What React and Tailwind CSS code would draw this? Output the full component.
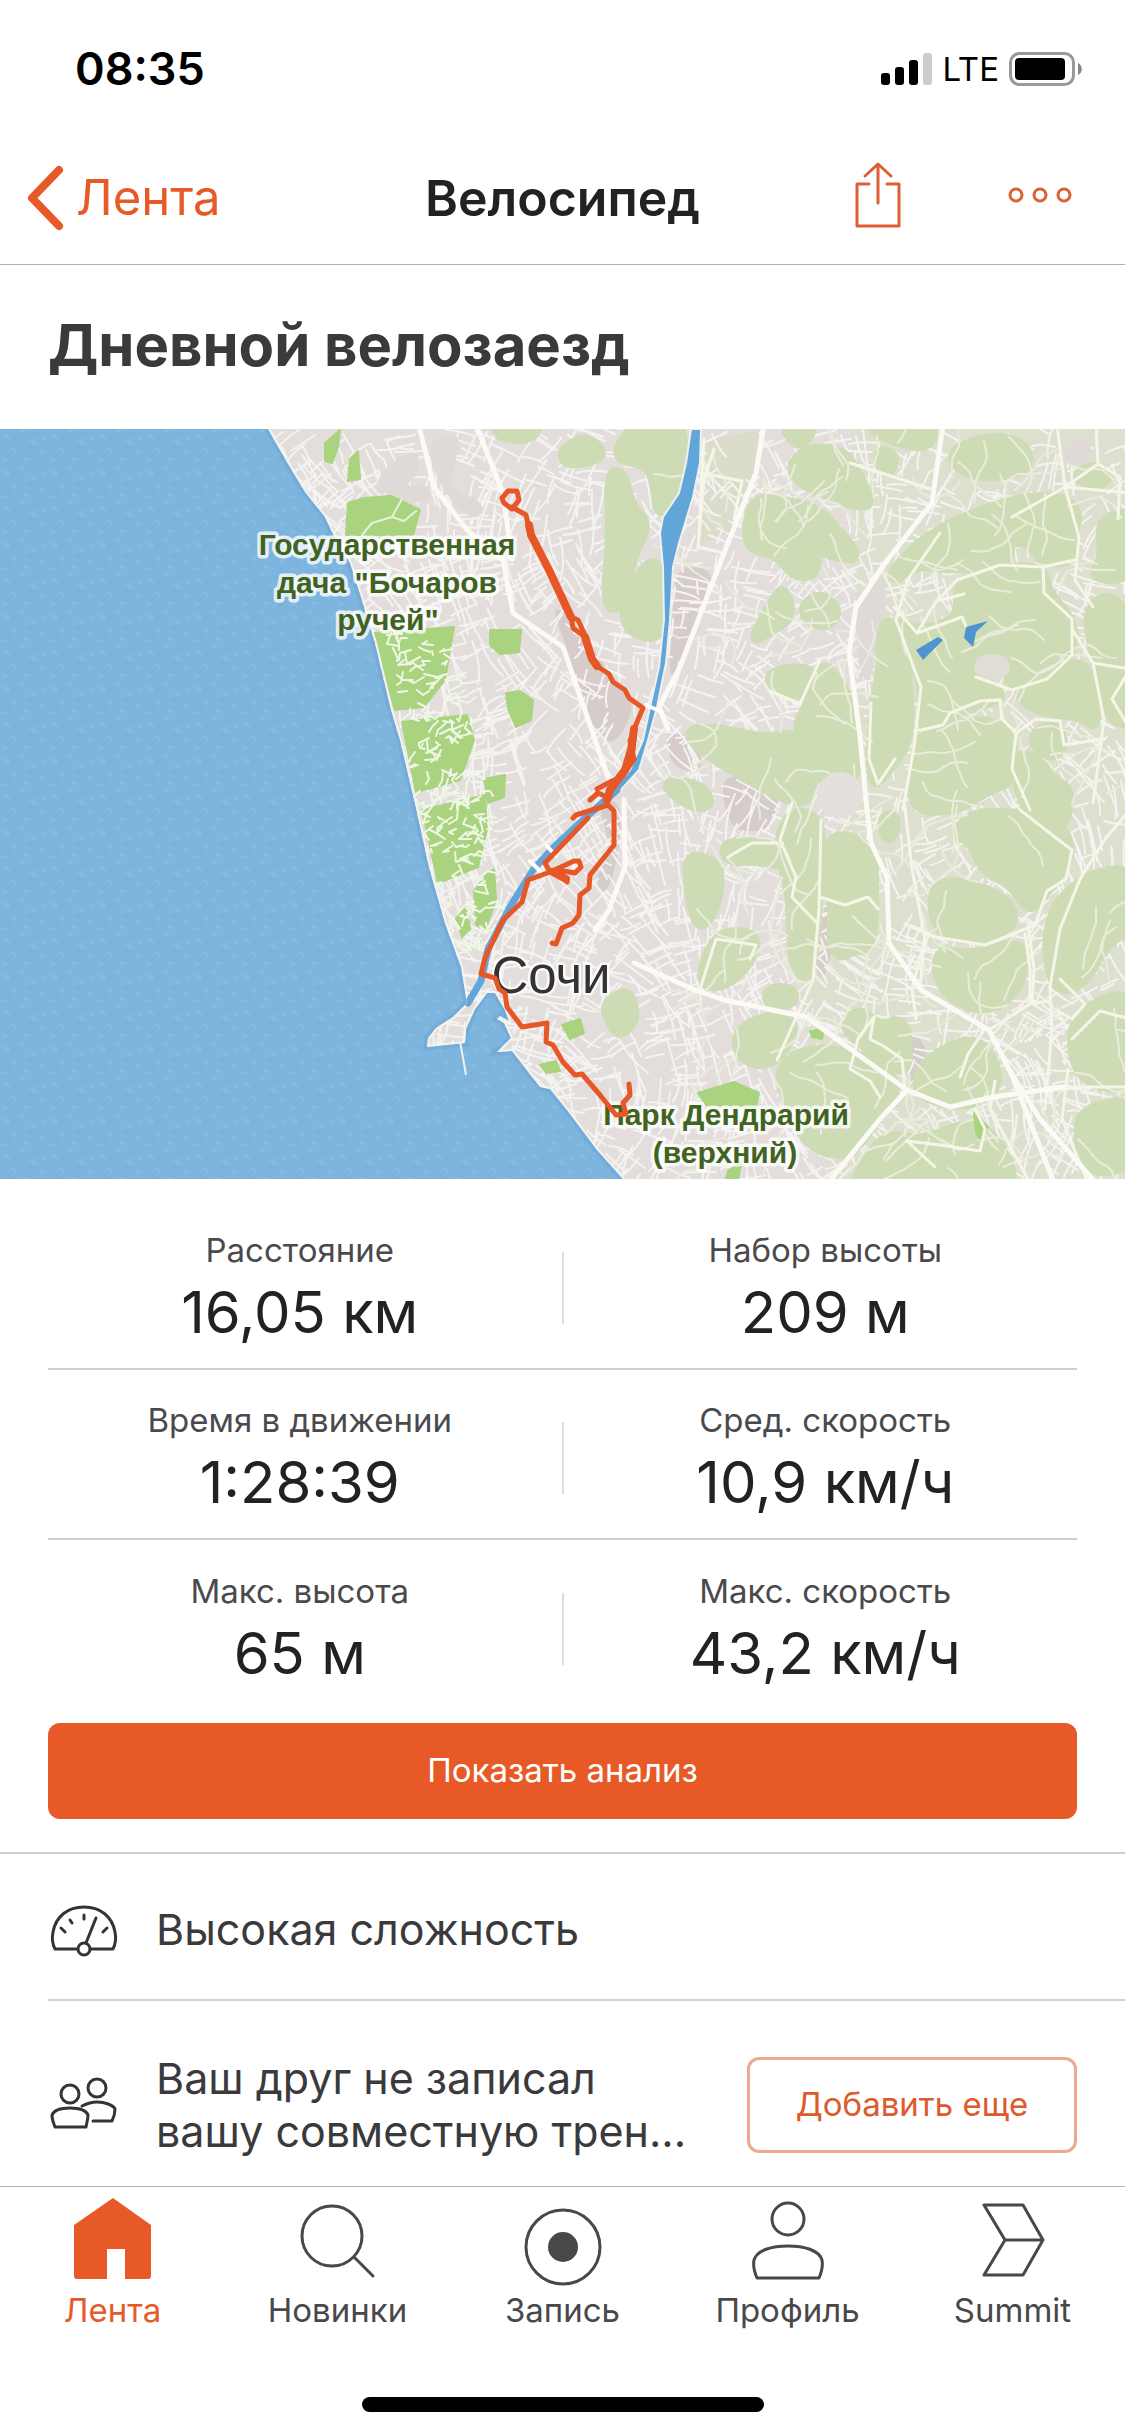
const stats = [
  [
    { label: 'Расстояние', value: '16,05 км' },
    { label: 'Набор высоты', value: '209 м' },
  ],
  [
    { label: 'Время в движении', value: '1:28:39' },
    { label: 'Сред. скорость', value: '10,9 км/ч' },
  ],
  [
    { label: 'Макс. высота', value: '65 м' },
    { label: 'Макс. скорость', value: '43,2 км/ч' },
  ],
];

// Map geometry, in a 1125 x 750 box
const LAND =
  'M262 -10 L268 0 L287 33 L305 63 L325 88 L332 103 L350 134 L361 168 L375 214 L391 281 L400 311 L416 379 L429 438 L445 494 L461 538 L467 574 L453 588 L436 599 L428 609 L427 618 L465 614 L466 600 L475 580 L487 564 L495 564 L505 581 L509 592 L500 587 L497 590 L504 594 L511 609 L497 623 L512 622 L540 658 L550 660 L567 681 L597 721 L623 750 L632 760 L1135 760 L1135 -10 Z';

const RIVER =
  'M691 0 L701 0 L700 34 L693 68 L679 114 L673 138 L670 191 L666 234 L657 278 L648 311 L639 341 L619 363 L612 361 L630 341 L643 311 L650 278 L659 238 L664 191 L663 138 L660 104 L663 88 L679 64 L686 34 Z';

const HILLS = [
  '637,-8 680,-8 684,31 677,61 659,88 657,58 648,34 612,29',
  '609,44 623,44 630,78 648,94 630,131 623,178 605,178 612,108',
  '630,158 659,124 662,191 655,211 623,198',
  '562,22 585,8 604,24 590,32 566,34',
  '784,-4 813,-4 806,12 794,14',
  '792,34 813,18 846,24 864,58 871,81 813,61 795,48',
  '752,71 777,71 820,81 842,108 856,124 849,131 813,118 817,144 795,148 777,124 745,118',
  '880,22 895,26 890,44 880,38',
  '950,24 986,8 1025,14 1029,41 986,48 960,41',
  '935,101 1011,71 1061,68 1079,84 1070,110 1075,131 1043,134 1030,112 1008,112 1010,128 993,134 957,140 914,134 896,151 892,142',
  '957,151 1011,138 1043,141 1047,164 1072,191 1072,224 1047,254 1007,258 1012,236 996,222 976,224 970,246 1000,262 998,271 950,284 943,298 921,301 925,258 907,218 896,191 917,204 961,191',
  '821,231 842,258 853,278 860,344 846,344 817,354 795,301 810,274',
  '776,168 784,160 792,188 765,204 752,212',
  '804,176 820,166 838,180 828,198 806,190',
  '770,244 810,238 814,262 788,266 772,256',
  '882,198 892,191 907,244 910,311 885,344 871,358 874,274 882,244',
  '866,-4 936,-4 926,20 890,10',
  '921,308 946,298 986,291 1011,304 1014,351 986,361 957,381 910,381 917,324',
  '1100,90 1135,82 1135,148 1092,150 1104,128',
  '1074,48 1092,36 1108,48 1096,58',
  '1086,182 1110,164 1135,200 1135,296 1108,290 1096,230',
  '1012,258 1074,234 1088,240 1098,300 1082,286 1036,282',
  '1034,304 1056,294 1064,318 1052,328 1036,318',
  '1016,324 1040,332 1052,352 1070,360 1064,400 1036,396 1018,360',
  '684,301 724,301 763,311 795,304 810,331 813,368 792,374 734,341 706,324',
  '660,352 700,356 712,376 690,378',
  '792,381 821,391 819,438 813,538 799,551 792,521 792,468 777,414',
  '724,416 750,412 782,420 790,438 760,430 728,432',
  '828,404 871,414 874,464 871,520 852,520 840,528 831,511 835,471 821,454',
  '884,386 896,388 892,410 884,406',
  '979,381 1057,391 1072,421 1057,448 1040,470 1029,481 1010,452 986,444 971,411 953,404',
  '1047,488 1083,448 1135,438 1135,500 1108,510 1080,560 1050,558',
  '1082,580 1135,560 1135,660 1082,654 1070,610',
  '1086,680 1135,670 1135,738 1084,744 1078,700',
  '932,448 1000,464 1015,488 1005,501 979,511 935,504',
  '936,520 972,528 1020,512 1026,540 1008,572 975,582 940,560',
  '917,648 932,628 968,610 990,622 1000,658 968,678 921,668',
  '860,580 880,600 900,590 908,610 905,648 870,620 842,598',
  '813,618 874,630 900,658 876,690 849,728 810,718 790,680 777,638',
  '716,504 756,504 752,531 724,558 698,554',
  '768,560 792,560 794,574 768,576',
  '738,598 785,584 795,604 770,638 738,628',
  '684,424 716,434 720,452 712,488 696,500',
  '628,560 636,590 620,606 612,596 604,576',
  '856,748 885,704 920,714 975,691 1004,721 1016,760 860,760',
  '496,-6 540,-6 530,10 500,8',
];

const BUILT_UP = [
  '548,166 590,214 610,246 640,276 604,330 570,230',
  '676,134 718,142 700,190 680,240 668,250 672,190',
  '664,300 698,308 704,344 672,340',
  '596,370 622,372 620,420 606,470 594,450 612,420',
  '824,470 838,470 828,548 814,548',
  '840,448 868,450 874,462 842,466',
  '912,600 930,624 922,650 908,660 906,620',
  '722,342 780,360 776,400 736,404 724,380',
];

// Quarters without a street grid
const OPEN_GROUND = [
  '384,38 418,18 420,46 396,62 372,66',
  '428,10 462,4 456,30 448,58 486,74 478,92 456,80 432,40',
  '376,66 424,52 434,72 404,74',
  '856,160 888,150 884,196 868,262 856,230',
  '1060,20 1090,4 1092,30 1070,40',
];

const PARKS = [
  '348,74 364,69 391,67 420,81 413,106 346,106',
  '325,14 340,1 338,18 332,34 325,32',
  '350,30 358,22 360,50 348,52',
  '373,204 454,198 445,251 424,278 395,281',
  '490,201 521,201 519,223 500,225 490,216',
  '506,264 520,262 533,271 531,291 516,298 508,280',
  '402,293 467,286 474,311 460,351 416,363',
  '484,350 505,346 504,368 488,374',
  '422,381 485,366 487,401 478,438 438,454',
  '698,664 734,653 759,664 756,678 706,676',
  '728,742 742,732 738,750 726,750',
  '810,602 824,600 822,610 812,608',
  '974,684 988,698 980,710 976,704',
  '540,636 556,632 560,642 546,644',
  '562,596 580,590 584,604 570,610',
  '456,490 466,478 470,500 462,508',
  '474,462 484,448 494,440 496,470 486,500 476,496',
];

const ROADS = [
  'M420 1 L434 58 L467 101 L503 131 L513 184 L563 218 L609 351',
  'M478 1 L503 64 L512 130',
  'M763 1 L756 44 L724 124 L680 238 L659 278 L668 300',
  'M943 -4 L932 74 L885 134 L856 178 L849 224 L860 308 L867 381 L871 414 L887 448 L889 514 L921 561 L989 601 L1011 644 L1054 754',
  'M634 534 L695 561 L724 571 L806 588 L907 661 L950 678 L993 668 L1065 658',
  'M907 661 L880 690 L828 754',
  'M624 371 L625 438 L609 481 L595 501',
  'M1011 644 L1040 690 L1096 754',
];

const LANES = [
  'M940 104 L908 150 L896 191 L921 258 L914 318 L903 381',
  'M904 371 L912 440 L925 510 L912 560 L916 590',
  'M821 391 L819 480 L813 551 L777 631',
  'M989 601 L1030 575 L1030 540 L1025 505',
  'M995 652 L990 680 L1030 754',
  'M1057 -4 L1065 58 L1079 108 L1075 151 L1093 178',
  'M1012 88 L1065 58 L1130 64',
  'M1096 -4 L1098 35 L1120 48 L1118 90',
  'M1065 58 L1098 35',
  'M1075 131 L1043 138 L1000 136 L957 151 L935 174',
  'M1043 138 L1044 164 L1072 190 L1072 226 L1047 250 L1012 261 L976 248',
  'M1072 200 L1093 234 L1104 291 L1093 374',
  'M921 301 L943 296 L950 284 L980 272 L1000 271 L1002 290 L1016 304 L1012 340 L1030 381',
  'M1016 304 L1036 290 L1060 292 L1064 316 L1104 310',
  'M917 204 L940 196 L962 188 L968 202',
  'M894 178 L917 204 L936 172 L964 165',
  'M871 274 L869 330 L878 355 L895 330',
  'M792 374 L780 411 L796 448 L792 468 L817 494',
  'M1020 381 L1060 412 L1072 421 L1066 450 L1047 462 L1035 496 L985 516 L935 508 L905 495',
  'M1130 381 L1105 410 L1080 450 L1060 500 L1050 558 L1052 600 L1045 680',
  'M1028 496 L1034 540 L1032 575 L1048 572',
  'M925 506 L920 560 L985 600 L968 625 L960 648',
  'M874 588 L858 610 L850 640 L870 652 L880 668',
  'M874 588 L870 610 L885 618 L902 630 L905 660',
  'M1065 658 L1130 658',
  'M1060 550 L1085 575 L1072 590 L1058 582',
  'M1072 610 L1100 582 L1130 590',
  'M1068 640 L1062 690 L1088 754',
  'M907 712 L940 716 L980 722 L985 700 L975 680',
  'M907 712 L935 738',
  'M700 560 L716 510 L756 516 L750 530',
  'M728 428 L752 414 L777 414',
  'M820 468 L845 476 L868 468 L878 480',
  'M702 44 L742 52 L734 90',
  'M704 10 L698 120',
  'M714 20 L704 50 L698 118 L724 124',
  'M850 34 L900 50 L930 60',
  'M820 231 L800 275 L770 262',
  'M1093 234 L1130 240 L1112 270 L1130 300',
];

const ROUTE =
  'M504 74 L502 69 L508 62 L517 62 L519 71 L512 80 L504 74 M512 78 L526 86 L531 108 L540 124 L549 141 L563 171 L571 188 L573 199 L585 208 L592 230 L597 237 L609 245 L613 253 L625 261 L629 269 L643 279 L635 298 L633 321 L627 341 L610 361 L607 373 M571 188 L578 191 L585 206 M635 298 L630 312 L634 330 L622 348 L612 352 L597 360 M607 368 L598 364 L590 371 M573 389 L576 386 L608 376 L614 382 L614 416 L590 446 L589 459 L580 466 L579 486 L573 494 L562 499 L556 515 L552 514 M588 389 L545 434 L550 443 L574 432 L579 432 L581 438 L575 444 L557 441 L567 453 M550 443 L528 451 L522 473 L503 491 L485 529 L481 545 L495 549 L499 560 L505 564 L507 578 L522 598 L547 594 L546 613 L553 616 L563 633 L575 646 L582 645 L600 666 L616 686 L626 685 L623 674 L630 666 L629 655';

function createRandom(seed) {
  let state = seed;
  return () => {
    state = (state * 16807) % 2147483647;
    return state / 2147483647;
  };
}

// Closed outline with rounded corners, from a list of "x,y" points
function smooth(points) {
  const list = points.split(' ').map((p) => p.split(',').map(Number));
  const mid = (a, b) => `${(a[0] + b[0]) / 2} ${(a[1] + b[1]) / 2}`;
  let d = `M${mid(list[list.length - 1], list[0])}`;
  list.forEach((p, i) => {
    d += `Q${p[0]} ${p[1]} ${mid(p, list[(i + 1) % list.length])}`;
  });
  return d + 'Z';
}

// Small city streets: a fixed pseudo-random network that follows the coast line
function buildStreets() {
  const rnd = createRandom(7);
  let d = '';
  for (let i = 0; i < 3600; i++) {
    const x = 270 + Math.pow(rnd(), 1.15) * 860;
    const y = rnd() * 750;
    const across = rnd() > 0.5;
    const base = 1.1 + Math.sin(x / 70 + y / 140) * 0.6 + Math.cos(y / 60) * 0.5;
    const angle = base + (across ? Math.PI / 2 : 0);
    const length = across ? 8 + rnd() * 12 : 10 + rnd() * 18;
    const bend = (rnd() - 0.5) * 1.2;
    const mx = x + Math.cos(angle) * length;
    const my = y + Math.sin(angle) * length;
    const ex = mx + Math.cos(angle + bend) * length * 0.7;
    const ey = my + Math.sin(angle + bend) * length * 0.7;
    d += `M${x.toFixed(0)} ${y.toFixed(0)}Q${mx.toFixed(0)} ${my.toFixed(0)} ${ex.toFixed(0)} ${ey.toFixed(0)}`;
  }
  return d;
}

// Winding lanes that climb into the hills
function buildTwigs() {
  const rnd = createRandom(41);
  let d = '';
  for (let i = 0; i < 190; i++) {
    let x = 700 + rnd() * 420;
    let y = rnd() * 750;
    let angle = rnd() * Math.PI * 2;
    d += `M${x.toFixed(0)} ${y.toFixed(0)}`;
    for (let j = 0; j < 4; j++) {
      angle += (rnd() - 0.5) * 1.2;
      const cx = x + Math.cos(angle) * 8;
      const cy = y + Math.sin(angle) * 8;
      angle += (rnd() - 0.5) * 1.2;
      x = cx + Math.cos(angle) * 8;
      y = cy + Math.sin(angle) * 8;
      d += `Q${cx.toFixed(0)} ${cy.toFixed(0)} ${x.toFixed(0)} ${y.toFixed(0)}`;
    }
  }
  return d;
}

// Footpaths inside the bright green parks
function buildPaths() {
  const rnd = createRandom(99);
  let d = '';
  for (let i = 0; i < 170; i++) {
    const y = 206 + rnd() * 320;
    const x = 385 + (y - 206) * 0.18 + rnd() * 70;
    d += `M${x.toFixed(0)} ${y.toFixed(0)}l${(rnd() * 26 - 13).toFixed(0)} ${(rnd() * 16 - 8).toFixed(0)}l${(rnd() * 18 - 6).toFixed(0)} ${(rnd() * 18 - 12).toFixed(0)}`;
  }
  return d;
}

const streets = buildStreets();
const twigs = buildTwigs();
const paths = buildPaths();

function RouteMap() {
  return (
    <svg viewBox="0 0 1125 750" className="block w-full" role="img" aria-label="Карта маршрута">
      <defs>
        <pattern id="waves" width="48" height="36" patternUnits="userSpaceOnUse">
          <rect width="48" height="36" fill="#7eb5de" />
          <path d="M4 6l5 3M20 3l4 -2M31 12l5 3M12 20l4 3M40 25l4 -2M24 29l5 2M3 32l4 -1M42 8l3 2" stroke="#88bce3" strokeWidth="2" strokeLinecap="round" />
          <path d="M12 10l4 -3M28 20l4 -2M38 33l4 -2M8 27l3 2M35 5l3 -1" stroke="#78b0da" strokeWidth="2" strokeLinecap="round" />
        </pattern>
        <clipPath id="land">
          <path d={LAND} />
        </clipPath>
      </defs>

      <rect width="1125" height="750" fill="url(#waves)" />
      <path d={LAND} fill="none" stroke="#6ea5d6" strokeWidth="7" strokeOpacity="0.6" />
      <path d="M460 612 L466 646" stroke="#eef0f0" strokeWidth="2" />

      <g clipPath="url(#land)" fill="none" strokeLinejoin="round" strokeLinecap="round">
        <path d={LAND} fill="#e3dedc" />
        <path d="M850 0H1125V750H830L800 560L860 300Z" fill="#dddfcf" />
        <polygon points="706,11 759,1 756,41 734,101 695,118 702,44" fill="#dcdccb" />
        {BUILT_UP.map((p) => (
          <path key={p} d={smooth(p)} fill="#d6cdca" />
        ))}
        <path d={streets} stroke="#f5f3f1" strokeWidth="2" />
        {OPEN_GROUND.map((p) => (
          <path key={p} d={smooth(p)} fill="#dfdad7" />
        ))}
        {HILLS.map((p) => (
          <path key={p} d={smooth(p)} fill="#cedcb6" stroke="#cedcb6" strokeWidth="12" />
        ))}
        <path d={twigs} stroke="#e9ecdb" strokeWidth="2" />
        {PARKS.map((p) => (
          <polygon key={p} points={p} fill="#a9d37f" stroke="#a9d37f" strokeWidth="2" />
        ))}
        <path d={paths} stroke="#eef6e4" strokeWidth="2" />
        <path d="M362 106 L372 94 L392 88 L402 70 M392 88 L404 92 L416 82" stroke="#e6f2d6" strokeWidth="2" />
        <circle cx="840" cy="366" r="23" fill="#e4dfdd" />
        <ellipse cx="992" cy="238" rx="18" ry="13" fill="#e0dcd6" />
        {LANES.map((d) => (
          <path key={d} d={d} stroke="#f6f6e8" strokeWidth="3" />
        ))}
        {ROADS.map((d) => (
          <path key={d} d={d} stroke="#fbfaf4" strokeWidth="5" />
        ))}
        <path d={LAND} stroke="#f2f4ee" strokeWidth="4" />
        <path d={RIVER} fill="#62a5d8" stroke="#eef1f2" strokeWidth="2" />
        <path d="M617 361 L585 389 L553 419 L533 441 L510 478 L488 520 L481 552 L468 574" stroke="#62a5d8" strokeWidth="7" />
        <path d="M646 276 L662 283 M547 417 L556 427 M530 432 L542 444" stroke="#ffffff" strokeWidth="4" />
        <path d="M916 221 L938 208 L943 211 L923 231 Z M966 198 L988 192 L976 203 L973 218 L964 209 Z" fill="#4f93cf" />
      </g>

      <g
        fontFamily="'Liberation Sans', Arial, sans-serif"
        textAnchor="middle"
        paintOrder="stroke"
        strokeLinejoin="round"
        stroke="#ffffff"
        strokeOpacity="0.8"
      >
        <g fontSize="30" fontWeight="700" fill="#406322" strokeWidth="7">
          <text x="387" y="126">Государственная</text>
          <text x="387" y="164">дача "Бочаров</text>
          <text x="388" y="201">ручей"</text>
          <text x="726" y="696">Парк Дендрарий</text>
          <text x="725" y="734">(верхний)</text>
        </g>
        <text x="551" y="564" fontSize="51" fill="#333333" strokeWidth="5">Сочи</text>
      </g>

      <path d={ROUTE} fill="none" stroke="#e75626" strokeWidth="5" strokeLinejoin="round" strokeLinecap="round" />
      <path
        d="M529 96 L531 106 L549 141 L563 171 L571 188 M585 208 L592 230 L597 237 M634 300 L631 321 L625 341 L610 361 L607 371 M553 443 L566 450"
        fill="none"
        stroke="#e75626"
        strokeWidth="8"
        strokeLinejoin="round"
        strokeLinecap="round"
      />
    </svg>
  );
}

function StatusBar() {
  return (
    <div className="flex h-[132px] items-center justify-between pl-[75px] pr-[42px] pt-[6px]">
      <span className="text-[45px] font-semibold text-black">08:35</span>
      <div className="flex items-center gap-[10px] text-black">
        <svg viewBox="0 0 51 34" className="h-[34px] w-[51px]">
          <rect x="0" y="21" width="9" height="12" rx="3" />
          <rect x="14" y="15" width="9" height="18" rx="3" />
          <rect x="28" y="8" width="9" height="25" rx="3" />
          <rect x="42" y="1" width="9" height="32" rx="3" fill="#cccccc" />
        </svg>
        <span className="text-[33px] leading-none">LTE</span>
        <svg viewBox="0 0 74 34" className="h-[34px] w-[74px]">
          <rect x="1.5" y="1.5" width="63" height="31" rx="9" fill="none" stroke="#999999" strokeWidth="3" />
          <rect x="6" y="6" width="50" height="22" rx="4" />
          <path d="M69 11c5 2 5 10 0 12z" fill="#888888" />
        </svg>
      </div>
    </div>
  );
}

function Header() {
  return (
    <header className="grid h-[133px] grid-cols-3 items-center border-b border-[#b2b2b2] px-[26px]">
      <button type="button" className="flex items-center gap-[10px] text-[49px] text-[#e75a28]">
        <svg viewBox="0 0 40 66" className="h-[66px] w-[40px]" fill="none" stroke="currentColor" strokeWidth="8" strokeLinecap="round" strokeLinejoin="round">
          <path d="M33 5L6 33l27 28" />
        </svg>
        Лента
      </button>
      <h1 className="text-center text-[50px] font-semibold text-[#222224]">Велосипед</h1>
      <div className="flex items-center justify-end gap-[106px] pb-[6px] pr-[26px] text-[#dd6034]">
        <button type="button" aria-label="Поделиться">
          <svg viewBox="0 0 46 68" className="h-[68px] w-[46px]" fill="none" stroke="currentColor" strokeWidth="3" strokeLinecap="round" strokeLinejoin="round">
            <path d="M14 23H2v42h42V23H32M23 42V3M10 15L23 3l13 12" />
          </svg>
        </button>
        <button type="button" aria-label="Ещё">
          <svg viewBox="0 0 66 18" className="h-[18px] w-[66px]" fill="none" stroke="currentColor" strokeWidth="3">
            <circle cx="9" cy="9" r="6" />
            <circle cx="33" cy="9" r="6" />
            <circle cx="57" cy="9" r="6" />
          </svg>
        </button>
      </div>
    </header>
  );
}

function Stat({ label, value }) {
  return (
    <div className="flex-1 text-center">
      <dt className="text-[33px] leading-[40px] text-[#4a4a4c]">{label}</dt>
      <dd className="mt-2 text-[58px] leading-[68px] text-[#222224]">{value}</dd>
    </div>
  );
}

function StatRow({ items }) {
  return (
    <dl className="flex h-[170px] items-center gap-[10px] pt-[7px]">
      <Stat {...items[0]} />
      <div className="h-[72px] w-[2px] bg-[#dcdcde]" />
      <Stat {...items[1]} />
    </dl>
  );
}

function GaugeIcon() {
  return (
    <svg viewBox="0 0 72 60" className="h-[60px] w-[72px] shrink-0" fill="none" stroke="#343436" strokeWidth="3" strokeLinecap="round" strokeLinejoin="round">
      <path d="M29 49H7C4 43 4 37 5 32C8 16 20 7 36 7s28 9 31 25c1 5 1 11-2 17H43" />
      <circle cx="36" cy="49" r="6" />
      <path d="M38 43l10-25M36 15v4M22 20l2 3M13 28l4 4M59 28l-4 4" />
    </svg>
  );
}

function FriendsIcon() {
  return (
    <svg viewBox="0 0 72 60" className="h-[60px] w-[72px] shrink-0" fill="none" stroke="#343436" strokeWidth="3" strokeLinecap="round" strokeLinejoin="round">
      <circle cx="22" cy="19" r="9" />
      <circle cx="49" cy="13" r="9" />
      <path d="M7 52C5 47 4 43 4 40c2-5 10-7 18-7s16 2 18 7c0 3-1 7-2 12z" />
      <path d="M34 31c4-2 9-4 15-4 8 0 16 3 18 7 0 3-1 8-3 12H45" />
    </svg>
  );
}

const tabs = [
  {
    label: 'Лента',
    active: true,
    icon: <path d="M45 4L83 31V82a3 3 0 0 1-3 3H57V55H39V85H9a3 3 0 0 1-3-3V31z" fill="currentColor" stroke="none" />,
  },
  {
    label: 'Новинки',
    icon: (
      <>
        <circle cx="39" cy="42" r="30" />
        <path d="M61 63l19 19" />
      </>
    ),
  },
  {
    label: 'Запись',
    icon: (
      <>
        <circle cx="45" cy="53" r="37" />
        <circle cx="45" cy="53" r="15" fill="currentColor" stroke="none" />
      </>
    ),
  },
  {
    label: 'Профиль',
    icon: (
      <>
        <circle cx="45" cy="25" r="16" />
        <path d="M14 84C11 77 10 71 11 66C14 56 29 52 45 52s31 4 34 14c1 5 0 11-3 18z" />
      </>
    ),
  },
  { label: 'Summit', icon: <path d="M16 11H55L75 46L55 81H16L37 46zM37 46H75" /> },
];

function TabBar() {
  return (
    <nav className="grid grid-cols-5 border-t border-[#b2b2b2] pt-[7px]">
      {tabs.map((tab) => (
        <a
          key={tab.label}
          href="#"
          aria-current={tab.active ? 'page' : undefined}
          className={tab.active ? 'flex flex-col items-center text-[#e75a28]' : 'flex flex-col items-center text-[#48484b]'}
        >
          <svg viewBox="0 0 90 96" className="h-[96px] w-[90px]" fill="none" stroke="currentColor" strokeWidth="3" strokeLinecap="round" strokeLinejoin="round">
            {tab.icon}
          </svg>
          <span className="text-[33px] leading-[40px]">{tab.label}</span>
        </a>
      ))}
    </nav>
  );
}

export default function App() {
  return (
    <div className="flex min-h-screen flex-col bg-white font-['Inter','Noto_Sans',sans-serif]">
      <StatusBar />
      <Header />

      <main>
        <h2 className="flex h-[164px] items-center px-12 pb-1 text-[58px] font-bold text-[#3a3a3c]">Дневной велозаезд</h2>
        <RouteMap />

        <section className="px-12 pt-[21px]">
          <div className="divide-y-2 divide-[#d0d0d6]">
            {stats.map((items) => (
              <StatRow key={items[0].label} items={items} />
            ))}
          </div>
          <button type="button" className="mt-[13px] h-24 w-full rounded-xl bg-[#e75a28] text-[33px] text-white">
            Показать анализ
          </button>
        </section>

        <section className="mt-[33px] border-t-2 border-[#d0d0d2]">
          <div className="ml-12 flex h-[147px] items-center gap-9 border-b-2 border-[#d0d0d2] pt-[6px]">
            <GaugeIcon />
            <p className="text-[43px] text-[#3a3a3c]">Высокая сложность</p>
          </div>
          <div className="flex h-[185px] items-center gap-9 pl-12 pr-12 pt-[22px]">
            <FriendsIcon />
            <p className="flex-1 text-[43px] leading-[53px] text-[#3a3a3c]">
              Ваш друг не записал
              <br />
              вашу совместную трен...
            </p>
            <button type="button" className="h-24 w-[330px] shrink-0 rounded-xl border-3 border-[#eba98d] text-[33px] text-[#dd5a2b]">
              Добавить еще
            </button>
          </div>
        </section>
      </main>

      <TabBar />
      <div className="mx-auto mb-6 mt-auto h-[15px] w-[402px] rounded-full bg-black" />
    </div>
  );
}
